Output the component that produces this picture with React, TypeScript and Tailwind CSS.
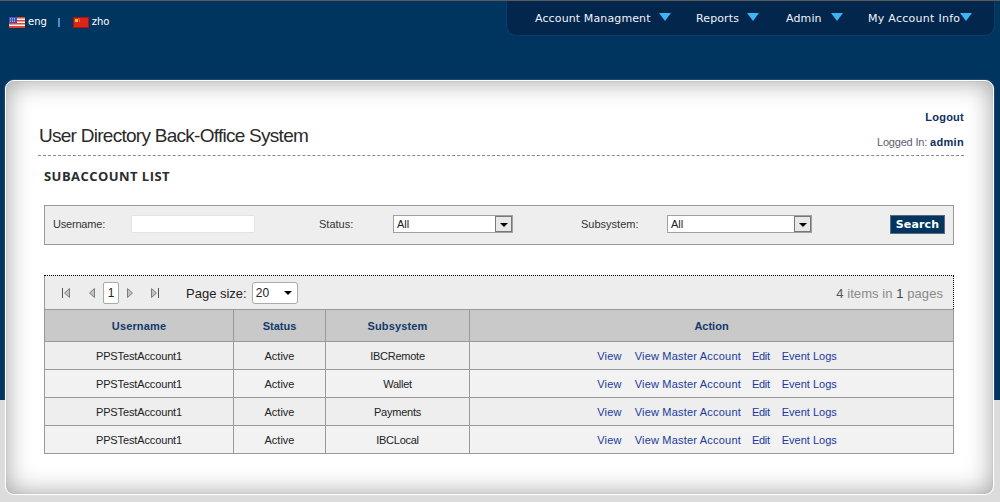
const rows = [
  { user: 'PPSTestAccount1', status: 'Active', sub: 'IBCRemote', bg: 'bg-[#eeeeee]' },
  { user: 'PPSTestAccount1', status: 'Active', sub: 'Wallet', bg: 'bg-[#f2f2f2]' },
  { user: 'PPSTestAccount1', status: 'Active', sub: 'Payments', bg: 'bg-[#eeeeee]' },
  { user: 'PPSTestAccount1', status: 'Active', sub: 'IBCLocal', bg: 'bg-[#f2f2f2]' },
];

const navItems = [
  { label: 'Account Managment', cls: 'w-[161px]', gap: 'ml-[8px]', text: 'tracking-[0.12px]' },
  { label: 'Reports', cls: 'w-[90px]', gap: 'ml-[8px]', text: 'tracking-[0.12px]' },
  { label: 'Admin', cls: 'w-[82px]', gap: 'ml-[9px]', text: 'tracking-[0.12px]' },
  { label: 'My Account Info', cls: 'w-[110px]', gap: 'ml-[0px]', text: 'tracking-[0.27px]' },
];

function UsFlag() {
  return (
    <svg width="16" height="11" viewBox="0 0 16 11" className="shrink-0">
      <rect width="16" height="11" fill="#f4f4f4" />
      <rect y="0" width="16" height="1.5" fill="#e0452f" />
      <rect y="3" width="16" height="1.5" fill="#e0452f" />
      <rect y="6" width="16" height="1.5" fill="#e0452f" />
      <rect y="9" width="16" height="2" fill="#e0452f" />
      <rect width="8" height="6" fill="#3f51b5" />
      <path d="M1 1.5h6M1 3h6M1 4.5h6" stroke="#dfe3fa" strokeWidth=".7" strokeDasharray="1 1" />
    </svg>
  );
}

function CnFlag() {
  return (
    <svg width="16" height="11" viewBox="0 0 16 11" className="shrink-0">
      <rect width="16" height="11" fill="#b70f0f" />
      <rect x="1" y="1" width="14" height="9" fill="#d9261c" />
      <rect x="2" y="2" width="3" height="3" fill="#f2c81e" />
      <rect x="5.5" y="1.5" width="1" height="1" fill="#f2c81e" />
      <rect x="6" y="3.5" width="1" height="1" fill="#f2c81e" />
    </svg>
  );
}

function FakeSelect({ width }: { width: string }) {
  return (
    <div className={`${width} h-[18px] flex items-stretch bg-white border border-[#a0a0a0] text-[11px] text-[#222]`}>
      <span className="flex-1 pl-[3px] leading-[16px]">All</span>
      <span className="w-[17px] bg-[#e8e8e8] border border-[#777] flex items-center justify-center">
        <span className="mt-[2px] border-x-[4px] border-t-[4px] border-x-transparent border-t-black" />
      </span>
    </div>
  );
}

function PagerIcon({ kind }: { kind: 'first' | 'prev' | 'next' | 'last' }) {
  const left = kind === 'first' || kind === 'prev';
  const bar = kind === 'first' || kind === 'last';
  return (
    <svg width="9" height="10" viewBox="0 0 9 10" className="shrink-0">
      {left ? <path d="M7.5.5v9L2.5 5z" fill="#c4c4c4" stroke="#666" strokeWidth=".8" /> : <path d="M1.5.5v9L6.5 5z" fill="#c4c4c4" stroke="#666" strokeWidth=".8" />}
      {bar && <rect x={left ? 0 : 8} y="0" width="1" height="10" fill="#555" />}
    </svg>
  );
}

export default function App() {
  return (
    <div className="h-[502px] w-[1000px] overflow-hidden border-t border-[#5a5a5a] bg-[linear-gradient(to_bottom,#003560_0,#003560_399px,#dcdcdc_399px)] font-['Liberation_Sans',sans-serif]">
      {/* top bar */}
      <div className="h-[79px] flex items-start">
        <div className="flex items-center pl-[9px] pt-[14px] text-[11px] text-white font-['DejaVu_Sans',sans-serif] leading-[14px]">
          <UsFlag />
          <span className="ml-[3px] text-[10px]">eng</span>
          <span className="ml-[11px] w-[2px] h-[9px] bg-[#4a90d0]" />
          <span className="ml-[13px]"><CnFlag /></span>
          <span className="ml-[3px] text-[10px] -tracking-[0.1px]">zho</span>
        </div>
        <div className="ml-auto mr-[5px] w-[489px] h-[35px] bg-[#03264c] border-x border-b border-[#0a3d6c] rounded-b-[10px] flex items-start pl-[28px] pt-[11px] font-['DejaVu_Sans',sans-serif] text-[11px] text-[#eef4fa] leading-[14px]">
          {navItems.map((n) => (
            <div key={n.label} className={`${n.cls} flex items-start`}>
              <span className={`whitespace-nowrap ${n.text}`}>{n.label}</span>
              <span className={`${n.gap} mt-[1px] border-x-[6px] border-t-[8px] border-x-transparent border-t-[#3db4f5]`} />
            </div>
          ))}
        </div>
      </div>

      {/* main panel */}
      <div className="ml-[5px] w-[989px] h-[415px] rounded-[9px] bg-white border border-white shadow-[0_0_2px_rgba(255,255,255,0.35),inset_0_0_1px_#888,inset_0_0_26px_rgba(0,0,0,0.38)] pl-[38px] pr-[29px] flex flex-col">
        <div className="h-[75px] flex items-end justify-between border-b border-dashed border-[#8c8c8c] pb-[7px] -ml-[6px]">
          <h1 className="pl-[1px] text-[19px] leading-[24px] text-[#2a2a2a] tracking-[-0.73px]">User Directory Back-Office System</h1>
          <div className="flex flex-col items-end text-[11px]">
            <a className="font-bold text-[#0b2f5e] leading-[14px] tracking-[0.25px]">Logout</a>
            <div className="mt-[11px] mb-[-1px] leading-[14px] text-[#5a6070]">
              <span className="-tracking-[0.2px]">Logged In:</span> <span className="font-bold text-[#0b2f5e] tracking-[0.3px]">admin</span>
            </div>
          </div>
        </div>

        <h2 className="mt-[12px] text-[13px] leading-[16px] font-bold text-[#2c2c2c] tracking-[0.45px] font-['Open_Sans',sans-serif]">SUBACCOUNT LIST</h2>

        <div className="mt-[21px] w-[910px] h-[40px] pb-[2px] border border-[#999] bg-[#eeeeee] flex items-center text-[11px] text-[#333]">
          <span className="ml-[8px] w-[78px] -tracking-[0.2px]">Username:</span>
          <input className="w-[124px] h-[18px] bg-white border border-[#e0e4ea] rounded-[1px]" />
          <span className="ml-[64px] w-[74px]">Status:</span>
          <FakeSelect width="w-[120px]" />
          <span className="ml-[68px] w-[86px]">Subsystem:</span>
          <FakeSelect width="w-[145px]" />
          <button className="ml-[78px] w-[55px] h-[19px] bg-[#003560] border border-[#5a6a7c] font-['DejaVu_Sans',sans-serif] font-bold text-[11px] text-white leading-none tracking-[0.15px]">Search</button>
        </div>

        <div className="mt-[30px] w-[910px]">
          <div className="h-[34px] bg-[#ededed] border-t border-dotted border-black border-r border-l-0 flex items-center">
            <div className="w-[1px] h-full bg-[#999]" />
            <div className="ml-[17px] flex items-center">
              <PagerIcon kind="first" />
              <span className="ml-[16px]"><PagerIcon kind="prev" /></span>
              <span className="ml-[7px] w-[16px] h-[22px] bg-white border border-[#aaa] rounded-[2px] text-center text-[12px] leading-[20px] text-[#222]">1</span>
              <span className="ml-[7px]"><PagerIcon kind="next" /></span>
              <span className="ml-[15px]"><PagerIcon kind="last" /></span>
            </div>
            <span className="ml-[27px] pt-[2px] text-[13px] text-[#222]">Page size:</span>
            <div className="ml-[5px] w-[46px] h-[22px] bg-white border border-[#aaa] rounded-[3px] flex items-center justify-between px-[3px] text-[12px] text-[#222]">
              <span>20</span>
              <span className="mr-[2px] border-x-[4px] border-t-[4px] border-x-transparent border-t-black" />
            </div>
            <div className="ml-auto mr-[10px] pt-[2px] text-[13px] text-[#8a8a8a] tracking-[0.07px]">
              <span className="text-[#555]">4</span> items in <span className="text-[#444]">1</span> pages
            </div>
          </div>

          <table className="w-[910px] table-fixed border-collapse text-[11px] text-[#222]">
            <colgroup>
              <col className="w-[189px]" />
              <col className="w-[92px]" />
              <col className="w-[144px]" />
              <col />
            </colgroup>
            <thead>
              <tr className="h-[32px] bg-[#c9c9c9] font-bold text-[#123a6b]">
                <th className="border border-[#999] pt-[2px] tracking-[0.15px]">Username</th>
                <th className="border border-[#999] pt-[2px]">Status</th>
                <th className="border border-[#999] pt-[2px] tracking-[0.15px]">Subsystem</th>
                <th className="border border-[#999] pt-[2px]">Action</th>
              </tr>
            </thead>
            <tbody>
              {rows.map((r) => (
                <tr key={r.sub} className={`h-[28px] ${r.bg}`}>
                  <td className="border border-[#999] text-center pt-[2px] -tracking-[0.13px]">{r.user}</td>
                  <td className="border border-[#999] text-center pt-[2px]">{r.status}</td>
                  <td className="border border-[#999] text-center pt-[2px] -tracking-[0.25px]">{r.sub}</td>
                  <td className="border border-[#999] text-[#1a3a9c] pt-[2px]">
                    <div className="flex justify-center pl-[11px]">
                      <a className="tracking-[0.2px]">View</a>
                      <a className="ml-[13px] tracking-[0.2px]">View Master Account</a>
                      <a className="ml-[11px] -tracking-[0.3px]">Edit</a>
                      <a className="ml-[12px]">Event Logs</a>
                    </div>
                  </td>
                </tr>
              ))}
            </tbody>
          </table>
        </div>
      </div>
    </div>
  );
}
